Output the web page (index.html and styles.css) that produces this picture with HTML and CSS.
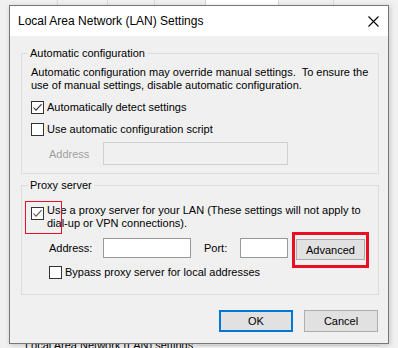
FILE: index.html
```html
<!DOCTYPE html>
<html lang="en">
<head>
    <meta charset="UTF-8">
    <meta name="viewport" content="width=device-width, initial-scale=1.0">
    <title>Local Area Network (LAN) Settings</title>
    <link rel="stylesheet" href="styles.css">
</head>
<body>
    <!-- Internet Options dialog behind the LAN settings window -->
    <div class="backdrop">
        <div class="tabs">
            <span class="tab t1"></span>
            <span class="tab t2"></span>
            <span class="tab t3"></span>
            <span class="tab t4"></span>
            <span class="tab t5 active"></span>
            <span class="tab t6"></span>
        </div>
        <div class="parent-group">
            <span class="parent-legend">Local Area Network (LAN) settings</span>
            <span class="parent-line"></span>
        </div>
    </div>

    <div class="dialog">
        <div class="titlebar">
            <span class="title">Local Area Network (LAN) Settings</span>
            <span class="close">
                <svg width="11" height="11" viewBox="0 0 11 11">
                    <path d="M0.5 0.5 L10.5 10.5 M10.5 0.5 L0.5 10.5" stroke="#000" stroke-width="1.1" fill="none"/>
                </svg>
            </span>
        </div>

        <div class="content">
            <div class="group group-auto">
                <span class="legend">Automatic configuration</span>
                <p class="note">Automatic configuration may override manual settings.&nbsp; To ensure the<br>use of manual settings, disable automatic configuration.</p>
                <label class="check">
                    <span class="box">
                        <svg width="11" height="11" viewBox="0 0 11 11"><path d="M1.5 5.5 L4 8.2 L9.6 2.2" stroke="#333" stroke-width="1.1" fill="none"/></svg>
                    </span>
                    Automatically detect settings
                </label>
                <label class="check">
                    <span class="box"></span>
                    Use automatic configuration script
                </label>
                <div class="field-row disabled">
                    <span class="field-label">Address</span>
                    <span class="textbox wide"></span>
                </div>
            </div>

            <div class="group group-proxy">
                <span class="legend">Proxy server</span>
                <label class="check multi">
                    <span class="box marked">
                        <svg width="11" height="11" viewBox="0 0 11 11"><path d="M1.5 5.5 L4 8.2 L9.6 2.2" stroke="#555" stroke-width="1.1" fill="none"/></svg>
                    </span>
                    <span class="check-text">Use a proxy server for your LAN (These settings will not apply to<br>dial-up or VPN connections).</span>
                </label>
                <div class="field-row proxy-row">
                    <span class="field-label">Address:</span>
                    <span class="textbox addr"></span>
                    <span class="port-label">Port:</span>
                    <span class="textbox port"></span>
                    <button class="btn advanced">Advanced</button>
                </div>
                <label class="check indent">
                    <span class="box"></span>
                    Bypass proxy server for local addresses
                </label>
            </div>

            <div class="actions">
                <button class="btn default">OK</button>
                <button class="btn">Cancel</button>
            </div>
        </div>
    </div>
</body>
</html>
```

FILE: styles.css
```css
body {
    margin: 0;
    width: 398px;
    height: 348px;
    overflow: hidden;
    background: #f0f0f0;
    font-family: "Segoe UI", "Liberation Sans", Arial, sans-serif;
    font-size: 11px;
    color: #000;
    position: relative;
}
.backdrop {
    display: flex;
    flex-direction: column;
}
.tabs {
    display: flex;
    height: 22px;
}
.tab {
    height: 22px;
    border-right: 1px solid #d9d9d9;
    box-sizing: border-box;
}
.t1 { width: 58px; }
.t2 { width: 50px; }
.t3 { width: 47px; }
.t4 { width: 51px; }
.t5 { width: 73px; }
.t6 { width: 55px; }
.tab.active {
    background: #fff;
}
.parent-group {
    display: flex;
    align-items: center;
    margin-top: 316px;
    padding-left: 25px;
    padding-right: 18px;
    line-height: 14px;
}
.parent-line {
    flex: 1;
    margin-left: 4px;
    border-top: 1px solid #dcdcdc;
}
.dialog {
    position: absolute;
    left: 9px;
    top: 5px;
    width: 380px;
    height: 339px;
    box-sizing: border-box;
    border: 1px solid #777;
    background: #f0f0f0;
    box-shadow: 1px 1px 5px rgba(0, 0, 0, 0.18);
    display: flex;
    flex-direction: column;
}
.titlebar {
    height: 30px;
    background: #fff;
    display: flex;
    align-items: center;
    justify-content: space-between;
    padding: 0 9px 0 8px;
}
.title {
    font-size: 12px;
}
.close {
    display: flex;
}
.content {
    padding: 17px 9px 0 11px;
}
.group {
    position: relative;
    border: 1px solid #dcdcdc;
    padding-left: 9px;
}
.group-auto {
    padding-top: 12px;
    padding-bottom: 8px;
}
.group-proxy {
    margin-top: 11px;
    padding-top: 18px;
    padding-bottom: 15px;
}
.legend {
    position: absolute;
    top: -8px;
    left: 6px;
    padding: 0 2px;
    line-height: 14px;
    background: #f0f0f0;
}
.note {
    margin: 0;
    line-height: 13px;
}
.check {
    display: flex;
    align-items: center;
    gap: 3px;
    height: 13px;
    margin-top: 9px;
    line-height: 13px;
}
.check.multi {
    align-items: flex-start;
    height: auto;
    margin-top: 0;
}
.check.multi .box {
    margin-top: 3px;
}
.check.indent {
    margin-top: 7px;
    margin-left: 18px;
}
.box {
    position: relative;
    width: 13px;
    height: 13px;
    box-sizing: border-box;
    border: 1px solid #333;
    background: #fff;
    flex-shrink: 0;
    display: flex;
}
.box.marked::after {
    content: "";
    position: absolute;
    left: -7px;
    top: -7px;
    width: 35px;
    height: 31px;
    border: 1px solid #e81123;
}
.field-row {
    display: flex;
    align-items: flex-start;
    margin-left: 18px;
}
.field-row.disabled {
    margin-top: 6px;
    align-items: center;
}
.field-row.disabled .field-label {
    color: #a0a0a0;
}
.field-label {
    width: 54px;
    line-height: 20px;
}
.textbox {
    box-sizing: border-box;
    height: 20px;
    border: 1px solid #999;
    background: #fff;
}
.textbox.wide {
    width: 185px;
    height: 23px;
    border-color: #cfcfcf;
    background: #f0f0f0;
}
.proxy-row {
    margin-top: 8px;
    height: 21px;
}
.textbox.addr {
    width: 88px;
}
.port-label {
    width: 36px;
    margin-left: 13px;
    line-height: 20px;
}
.textbox.port {
    width: 48px;
}
.btn {
    box-sizing: border-box;
    width: 74px;
    height: 22px;
    padding: 0;
    border: 1px solid #adadad;
    background: #e1e1e1;
    font: inherit;
    color: #000;
}
.btn.advanced {
    position: relative;
    width: 69px;
    height: 21px;
    margin-left: 8px;
    margin-top: 1px;
}
.btn.advanced::after {
    content: "";
    position: absolute;
    left: -5px;
    top: -8px;
    width: 77px;
    height: 36px;
    box-sizing: border-box;
    border: 3px solid #e81123;
}
.btn.default {
    border: 2px solid #0078d7;
}
.actions {
    display: flex;
    justify-content: flex-end;
    gap: 11px;
    margin-top: 15px;
    padding-right: 1px;
}
```
